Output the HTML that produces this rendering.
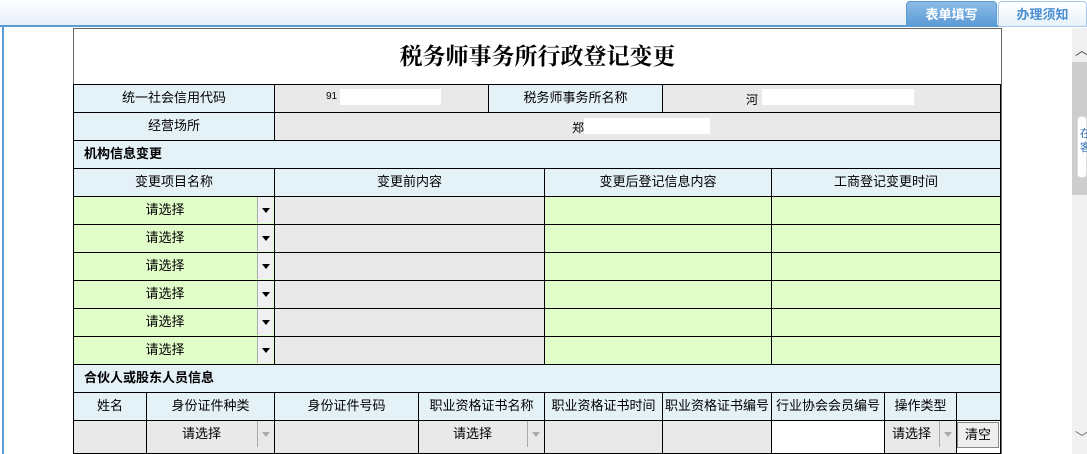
<!DOCTYPE html>
<html style="width:1087px;height:454px;overflow:hidden"><head><meta charset="utf-8"><style>
*{margin:0;padding:0;box-sizing:border-box}
body{width:1087px;height:454px;overflow:hidden;background:#fff;font-family:"Liberation Sans","Noto Sans CJK SC",sans-serif;font-size:13px;color:#000;position:relative}
.top{position:absolute;left:0;top:0;width:1087px;height:27px;background:linear-gradient(#fff,#e6eff9);border-bottom:2px solid #5b9bd5}
.tab{position:absolute;top:1px;height:26px;text-align:center;line-height:26px;font-weight:bold;font-size:13px;border-radius:4px 4px 0 0}
.t1{left:906px;width:91px;background:linear-gradient(#8cbbe6,#5b9bd5);color:#fff;border:1px solid #5b9bd5}
.t2{left:998px;width:89px;background:linear-gradient(#fff,#e8f1fa);color:#4a90d0;border:1px solid #a9c8e8}
.lb{position:absolute;left:2px;top:27px;width:2px;height:427px;background:#5b9bd5}
.sb{position:absolute;left:1072px;top:28px;width:15px;height:426px;background:#f0f0f0}
.thumb{position:absolute;left:1072px;top:62px;width:15px;height:133px;background:#cdcdcd}
.wrap{position:absolute;left:73px;top:28px;width:929px;height:426px;border-left:1px solid #666;border-right:1px solid #666;border-top:1px solid #666}
.title{position:absolute;left:74px;top:29px;width:927px;height:55px;text-align:center;line-height:55px;font-size:23px;font-weight:bold;font-family:"Liberation Serif","Noto Serif CJK SC",serif}
.c{position:absolute;border:1px solid #000;text-align:center;line-height:26px;font-size:13px;overflow:hidden}
.b{background:#e4f1f7}.g{background:#e9e9e9}.gr{background:#e0fcc8}.w{background:#fff}
.sec{text-align:left;padding-left:10px;font-weight:bold}
.dd{position:absolute;width:16px;height:26px;background:#f0f0f0;border-left:1px solid #aaa}
.dd::after{content:"";position:absolute;left:4px;top:11px;border:4px solid transparent;border-top:5px solid #000}
.dd.l::after{border-top-color:#aaa}
.wh{position:absolute;background:#fff;height:16px}
.btn{position:absolute;background:#eee;border:1px solid #888;text-align:center;line-height:24px}
</style></head><body>
<div class="top"></div>
<div class="tab t1">表单填写</div>
<div class="tab t2">办理须知</div>
<div class="lb"></div>
<div class="sb"></div><div class="thumb"></div>
<div style="position:absolute;left:1075px;top:40px;font-size:14px;color:#555">︿</div>
<div style="position:absolute;left:1075px;top:428px;font-size:14px;color:#777">﹀</div>
<div style="position:absolute;left:1077px;top:116px;width:10px;height:62px;background:#fff;border:1px solid #ddd;border-radius:4px;font-size:11px;color:#2d6db5;line-height:14px;padding:10px 0 0 2px">在<br>客</div>
<div class="wrap"></div>
<div class="title">税务师事务所行政登记变更</div>

<div class="c b" style="left:73px;top:84px;width:202px;height:29px">统一社会信用代码</div>
<div class="c g" style="left:274px;top:84px;width:215px;height:29px"></div>
<div style="position:absolute;left:326px;top:91px;font-size:10px">91</div>
<div class="wh" style="left:340px;top:89px;width:101px"></div>
<div class="c b" style="left:488px;top:84px;width:175px;height:29px">税务师事务所名称</div>
<div class="c g" style="left:662px;top:84px;width:339px;height:29px"></div>
<div style="position:absolute;left:746px;top:91px;font-size:12px">河</div>
<div class="wh" style="left:762px;top:89px;width:152px"></div>

<div class="c b" style="left:73px;top:112px;width:202px;height:29px">经营场所</div>
<div class="c g" style="left:274px;top:112px;width:727px;height:29px"></div>
<div style="position:absolute;left:572px;top:119px;font-size:12px">郑</div>
<div class="wh" style="left:584px;top:118px;width:126px"></div>

<div class="c b sec" style="left:73px;top:140px;width:928px;height:29px">机构信息变更</div>
<div class="c b" style="left:73px;top:168px;width:202px;height:29px">变更项目名称</div>
<div class="c b" style="left:274px;top:168px;width:271px;height:29px">变更前内容</div>
<div class="c b" style="left:544px;top:168px;width:228px;height:29px">变更后登记信息内容</div>
<div class="c b" style="left:771px;top:168px;width:230px;height:29px">工商登记变更时间</div>

<div id="rows"></div>
<script>
var h='';for(var i=0;i<6;i++){var y=196+i*28;
h+='<div class="c gr" style="left:73px;top:'+y+'px;width:202px;height:29px;padding-right:18px">请选择<div class="dd" style="left:183px;top:0"></div></div>';
h+='<div class="c g" style="left:274px;top:'+y+'px;width:271px;height:29px"></div>';
h+='<div class="c gr" style="left:544px;top:'+y+'px;width:228px;height:29px"></div>';
h+='<div class="c gr" style="left:771px;top:'+y+'px;width:230px;height:29px"></div>';}
document.getElementById('rows').innerHTML=h;
</script>

<div class="c b sec" style="left:73px;top:364px;width:928px;height:29px">合伙人或股东人员信息</div>
<div id="p"></div>
<script>
var xs=[73,146,274,418,544,662,771,884,956,1000];
var hd=['姓名','身份证件种类','身份证件号码','职业资格证书名称','职业资格证书时间','职业资格证书编号','行业协会会员编号','操作类型',''];
var h='';
for(var i=0;i<9;i++){var w=xs[i+1]-xs[i]+1;
h+='<div class="c b" style="left:'+xs[i]+'px;top:392px;width:'+w+'px;height:29px">'+hd[i]+'</div>';
var y=420;var cls=(i==6)?'w':'g';var t='';
if(i==1||i==3||i==7){t='请选择<div class="dd l" style="left:'+(w-19)+'px;top:0;background:#e9e9e9"></div>';}
if(i==8){cls='w';}
h+='<div class="c '+cls+'" style="left:'+xs[i]+'px;top:'+y+'px;width:'+w+'px;height:34px;'+(t?'padding-right:18px':'')+'">'+t+'</div>';}
h+='<div class="btn" style="left:957px;top:422px;width:42px;height:26px">清空</div>';
document.getElementById('p').innerHTML=h;
</script>
</body></html>
